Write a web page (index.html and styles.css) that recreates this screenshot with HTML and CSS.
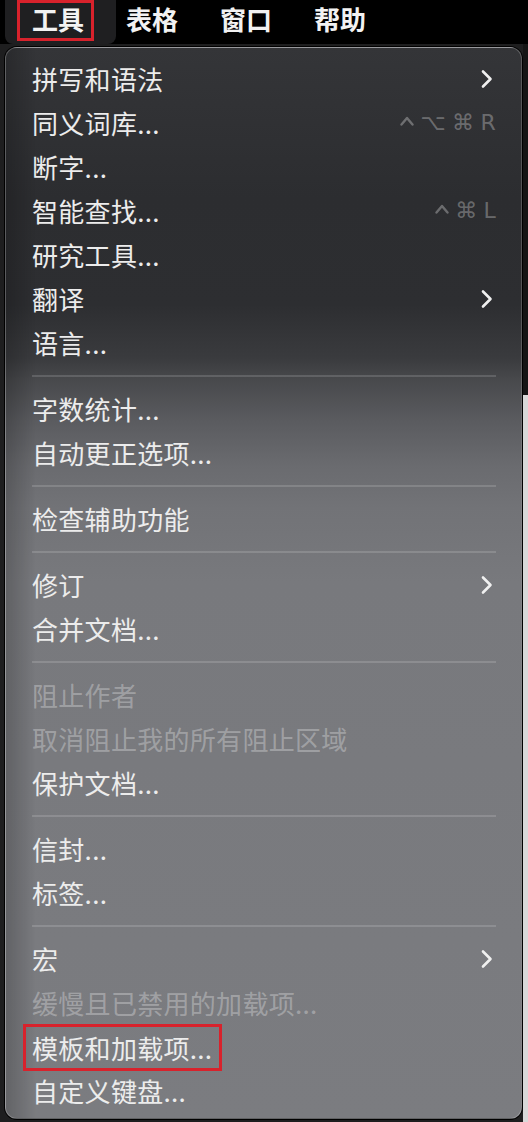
FILE: index.html
```html
<!DOCTYPE html>
<html>
<head>
  <title>工具菜单</title>
  <link rel="stylesheet" href="styles.css">
</head>
<body>
  <div class="menubar">
    <div class="bar-item active"><span class="mark">工具</span></div>
    <div class="bar-item">表格</div>
    <div class="bar-item">窗口</div>
    <div class="bar-item">帮助</div>
  </div>

  <div class="desk">
    <div class="menu">
      <div class="item">
        <span>拼写和语法</span>
        <svg class="chev" width="14" height="20" viewBox="0 0 14 20"><path d="M3 2.5 L10.5 10 L3 17.5" /></svg>
      </div>
      <div class="item">
        <span>同义词库...</span>
        <span class="keys">
          <svg class="ctrl" width="14" height="12" viewBox="0 0 14 12"><path d="M1.5 9.5 L7 3 L12.5 9.5" /></svg>
          <i>⌥</i><i>⌘</i><i>R</i>
        </span>
      </div>
      <div class="item"><span>断字...</span></div>
      <div class="item">
        <span>智能查找...</span>
        <span class="keys">
          <svg class="ctrl" width="14" height="12" viewBox="0 0 14 12"><path d="M1.5 9.5 L7 3 L12.5 9.5" /></svg>
          <i>⌘</i><i>L</i>
        </span>
      </div>
      <div class="item"><span>研究工具...</span></div>
      <div class="item">
        <span>翻译</span>
        <svg class="chev" width="14" height="20" viewBox="0 0 14 20"><path d="M3 2.5 L10.5 10 L3 17.5" /></svg>
      </div>
      <div class="item"><span>语言...</span></div>
      <div class="sep"></div>

      <div class="item"><span>字数统计...</span></div>
      <div class="item"><span>自动更正选项...</span></div>
      <div class="sep"></div>

      <div class="item"><span>检查辅助功能</span></div>
      <div class="sep"></div>

      <div class="item">
        <span>修订</span>
        <svg class="chev" width="14" height="20" viewBox="0 0 14 20"><path d="M3 2.5 L10.5 10 L3 17.5" /></svg>
      </div>
      <div class="item"><span>合并文档...</span></div>
      <div class="sep"></div>

      <div class="item disabled"><span>阻止作者</span></div>
      <div class="item disabled"><span>取消阻止我的所有阻止区域</span></div>
      <div class="item"><span>保护文档...</span></div>
      <div class="sep"></div>

      <div class="item"><span>信封...</span></div>
      <div class="item"><span>标签...</span></div>
      <div class="sep"></div>

      <div class="item">
        <span>宏</span>
        <svg class="chev" width="14" height="20" viewBox="0 0 14 20"><path d="M3 2.5 L10.5 10 L3 17.5" /></svg>
      </div>
      <div class="item disabled"><span>缓慢且已禁用的加载项...</span></div>
      <div class="item"><span class="mark-box">模板和加载项...</span></div>
      <div class="item"><span>自定义键盘...</span></div>
    </div>
  </div>
</body>
</html>
```

FILE: styles.css
```css
html,
body {
  margin: 0;
  padding: 0;
}

body {
  width: 528px;
  height: 1122px;
  overflow: hidden;
  background: #000;
  font-family: "Noto Sans CJK SC", sans-serif;
  color: #ececec;
}

.menubar {
  display: flex;
  align-items: flex-start;
  height: 44px;
  padding-left: 5px;
  background: #000;
}

.bar-item {
  padding: 0 21px;
  height: 44px;
  line-height: 38px;
  font-size: 26px;
  font-weight: 600;
  color: #f2f2f2;
}

.bar-item.active {
  padding: 0 22px 0 12px;
  margin-right: -11px;
  background: #1f1f21;
  border-radius: 0 0 8px 8px;
  position: relative;
  z-index: 1;
}

.mark {
  display: inline-block;
  box-sizing: border-box;
  height: 41px;
  line-height: 32px;
  padding: 0 7px 3px 12px;
  border: 3px solid #d8222c;
}

.desk {
  height: 1078px;
  padding: 3px 6px 0 5px;
  background:
    linear-gradient(#151515 0 351px, #d8d8d8 351px) right top / 5px 100% no-repeat,
    #1e1e1f;
}

.menu {
  box-sizing: border-box;
  width: 517px;
  padding: 9px 25px 5px 26px;
  border: 1px solid rgba(255, 255, 255, 0.22);
  border-radius: 12px;
  box-shadow: 0 0 0 1px #000;
  background:
    linear-gradient(to right, rgba(0, 0, 0, 0.2), rgba(0, 0, 0, 0) 30px),
    linear-gradient(#343538 0%, #2c2d30 14%, #2d2e31 24%, #3a3b3e 29%, #48494c 31%,
      #5b5c60 35%, #6a6b6f 39%, #727377 43%, #78797d 50%, #7b7c80 100%);
}

.item {
  display: flex;
  align-items: center;
  justify-content: space-between;
  height: 44px;
  line-height: 44px;
  font-size: 26px;
  letter-spacing: 0.3px;
  white-space: nowrap;
}

.item.disabled {
  color: rgba(255, 255, 255, 0.3);
}

.chev {
  margin-right: 2px;
}

.chev path {
  fill: none;
  stroke: #f0f0f0;
  stroke-width: 2.6;
  stroke-linecap: round;
  stroke-linejoin: round;
}

.keys {
  display: flex;
  align-items: center;
  gap: 6px;
  font-family: "DejaVu Sans", sans-serif;
  font-size: 22px;
  color: rgba(255, 255, 255, 0.3);
}

.keys i {
  font-style: normal;
}

.ctrl {
  margin-top: -4px;
}

.ctrl path {
  fill: none;
  stroke: rgba(255, 255, 255, 0.3);
  stroke-width: 2.4;
  stroke-linecap: round;
  stroke-linejoin: round;
}

.sep {
  height: 2px;
  margin: 10px 0;
  background: rgba(255, 255, 255, 0.15);
}

.mark-box {
  display: inline-block;
  box-sizing: border-box;
  height: 47px;
  line-height: 41px;
  margin-left: -9px;
  padding: 0 7px 0 6px;
  border: 3px solid #d8222c;
}
```
